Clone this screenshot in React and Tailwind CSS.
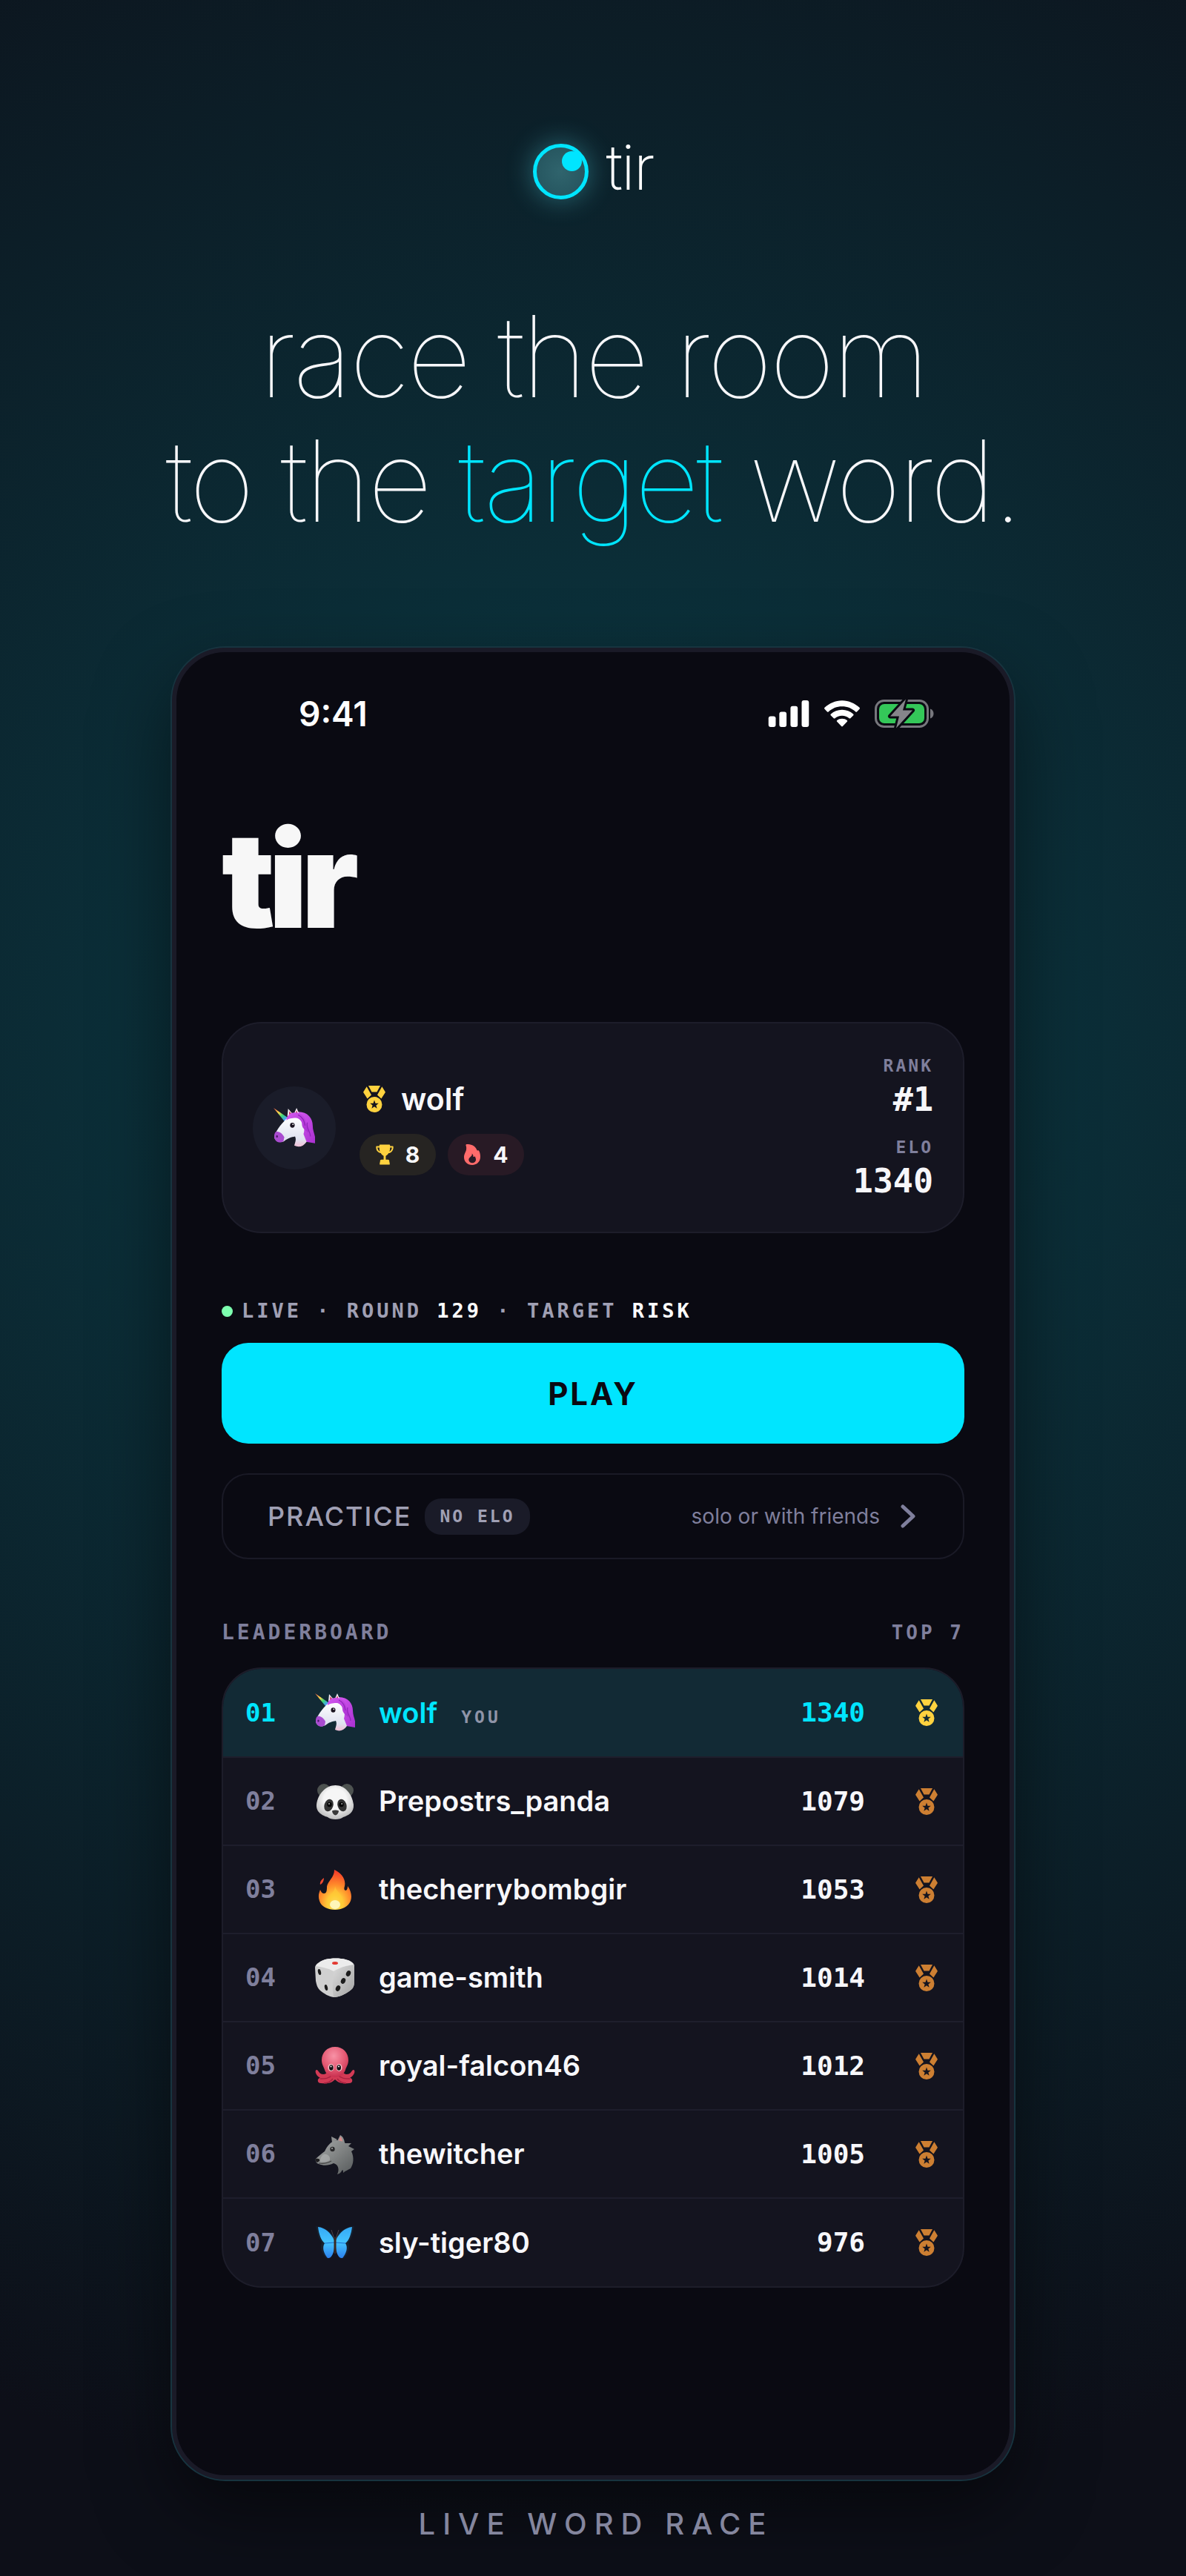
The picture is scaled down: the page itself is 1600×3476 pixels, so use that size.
const players = [
  { rank: "01", avatar: Unicorn, name: "wolf", elo: 1340, you: true },
  { rank: "02", avatar: Panda, name: "Prepostrs_panda", elo: 1079 },
  { rank: "03", avatar: Fire, name: "thecherrybombgir", elo: 1053 },
  { rank: "04", avatar: Die, name: "game-smith", elo: 1014 },
  { rank: "05", avatar: Octopus, name: "royal-falcon46", elo: 1012 },
  { rank: "06", avatar: Wolf, name: "thewitcher", elo: 1005 },
  { rank: "07", avatar: Butterfly, name: "sly-tiger80", elo: 976 },
];

/* ---------- avatars, all on a 54x54 grid ---------- */

function Unicorn({ className }) {
  return (
    <svg viewBox="0 0 54 54" className={className} aria-hidden="true">
      <defs>
        <linearGradient id="horn" x1="0" y1="0" x2="1" y2="1">
          <stop offset="0" stopColor="#ff5a4d" />
          <stop offset=".35" stopColor="#ffd84a" />
          <stop offset=".6" stopColor="#38d67a" />
          <stop offset=".85" stopColor="#4a9bff" />
          <stop offset="1" stopColor="#b58cff" />
        </linearGradient>
        <linearGradient id="mane" x1="0" y1="0" x2="1" y2="1">
          <stop offset="0" stopColor="#d45af0" />
          <stop offset="1" stopColor="#a92fd0" />
        </linearGradient>
        <linearGradient id="uniFace" x1="0" y1="0" x2="0" y2="1">
          <stop offset="0" stopColor="#ffffff" />
          <stop offset=".75" stopColor="#dfe2f0" />
          <stop offset="1" stopColor="#f0bfd6" />
        </linearGradient>
      </defs>
      <path d="M30 6C44 5 51 14 51 24c0 9 5 14 3 23-4-1-7-1-12-2l-8-17z" fill="url(#mane)" />
      <path d="M18 12 19 2l6 7zM26 10l4-9 4 9-2 7z" fill="#f3eef6" />
      <path d="M20 10l.6-5 3 4zM27.500 11 30 4l2.500 7-1.500 5z" fill="#c8365f" />
      <path d="M0 1 19 14l-5 4z" fill="url(#horn)" />
      <path d="M14 18c4-6 14-7 20-2 6 6 7 13 5 19l4 10c-4 6-10 8-16 5 1-4 3-8 1-12-5 1-9 2-14 6-5 3-12 1-13-5 0-4 6-14 13-21z" fill="url(#uniFace)" />
      <path d="M3 32c3-1 8 1 11 7l-1 5c-5 4-11 1-12-5 0-3 0-5 2-7z" fill="#a94bd0" />
      <path d="M17 17c-1-5 5-11 12-10 7 0 12 5 13 12 1 5 4 8 3 14-3-3-8-5-8-11 0-4-3-7-7-8-4 0-9 0-13 3z" fill="url(#mane)" />
      <path d="M32 10c7 3 8 9 9 14M44 20c-2 8 4 11 4 18" stroke="#8f24b8" strokeWidth="1.200" fill="none" />
      <ellipse cx="24.500" cy="23.500" rx="3" ry="3.300" fill="#1b1420" />
      <circle cx="25.300" cy="22.300" r=".9" fill="#fff" />
      <ellipse cx="4.500" cy="38" rx="1.200" ry="1.600" fill="#4a1666" />
    </svg>
  );
}

function Panda({ className }) {
  return (
    <svg viewBox="0 0 54 54" className={className} aria-hidden="true">
      <defs>
        <radialGradient id="pandaFace" cx=".5" cy=".4" r=".6">
          <stop offset=".5" stopColor="#f6f6f6" />
          <stop offset="1" stopColor="#bdbdbd" />
        </radialGradient>
      </defs>
      <circle cx="12" cy="12" r="9" fill="#4d5250" />
      <circle cx="43" cy="12" r="9" fill="#4d5250" />
      <path d="M27.500 5C40 5 50 16 52 31c1 11-8 15-14 17-4 4-17 4-21 0C11 46 1 42 2 31 4 16 15 5 27.500 5z" fill="url(#pandaFace)" />
      <ellipse cx="18.500" cy="32" rx="6" ry="8.500" fill="#333" transform="rotate(18 18.500 32)" />
      <ellipse cx="36.500" cy="32" rx="6" ry="8.500" fill="#333" transform="rotate(-18 36.500 32)" />
      <circle cx="19.500" cy="31" r="3.200" fill="#050505" />
      <circle cx="35.500" cy="31" r="3.200" fill="#050505" />
      <circle cx="19" cy="30" r="1" fill="#aaa" />
      <circle cx="36.200" cy="30" r="1" fill="#aaa" />
      <path d="M23 39.500q4.500-2 9 0c0 3-3 6-4.500 6S23 42.500 23 39.500z" fill="#3a3a3a" />
    </svg>
  );
}

function Fire({ className }) {
  return (
    <svg viewBox="0 0 54 54" className={className} aria-hidden="true">
      <defs>
        <radialGradient id="fireBody" cx=".5" cy=".85" r=".8">
          <stop offset="0" stopColor="#fff6a0" />
          <stop offset=".25" stopColor="#ffd43c" />
          <stop offset=".6" stopColor="#ff8a2a" />
          <stop offset="1" stopColor="#f4402a" />
        </radialGradient>
      </defs>
      <path d="M26 0c9 4 16 12 14 22-1 3-1 5 1 6 2 0 3-3 3-6 5 7 6 14 4 20-3 8-12 12-21 12S8 50 6 42C4 36 5 32 7 27c1 3 3 5 5 5 4 0 4-5 4-9 1-8 10-12 10-23z" fill="url(#fireBody)" />
      <path d="M12 11c0 4-2 8-5 9-1-4 2-7 5-9z" fill="#ee4a30" />
      <path d="M27 22c1 7 9 10 10 17 3 8-3 14-10 14s-13-6-10-14c3-6 10-9 10-17z" fill="#ffc935" opacity=".65" />
      <ellipse cx="27" cy="47" rx="7" ry="6" fill="#fff9c4" opacity=".9" />
    </svg>
  );
}

function Die({ className }) {
  return (
    <svg viewBox="0 0 54 54" className={className} aria-hidden="true">
      <defs>
        <linearGradient id="dieRight" x1="0" y1="0" x2="1" y2="1">
          <stop offset="0" stopColor="#dcdcdc" />
          <stop offset="1" stopColor="#a3a3a3" />
        </linearGradient>
      </defs>
      <path d="M14 2C22 0 34 0 41 2c6 2 11 4 12 8v22c0 6-2 10-7 13-6 4-13 8-21 8-7-1-13-5-18-9-4-4-5-8-6-13L0 13c0-5 8-9 14-11z" fill="#d0d0d0" />
      <path d="M25 18c8-5 19-8 27-9l1 3v20c0 6-2 10-7 13-6 4-13 8-21 8-2-11-2-23 0-35z" fill="url(#dieRight)" />
      <path d="M1 11C4 6 10 3 14 2c8-2 20-2 27 0 5 1 9 3 11 7-9 1-19 4-27 9-7-4-16-6-24-7z" fill="#ececec" />
      <ellipse cx="27" cy="7" rx="4" ry="2" fill="#e33a32" />
      <g fill="#1c1c1c">
        <ellipse cx="6" cy="19" rx="2" ry="4" transform="rotate(-14 6 19)" />
        <ellipse cx="15" cy="40" rx="2" ry="4" transform="rotate(-14 15 40)" />
        <ellipse cx="45" cy="21" rx="3" ry="4" transform="rotate(24 45 21)" />
        <ellipse cx="38" cy="31" rx="3" ry="4" transform="rotate(24 38 31)" />
        <ellipse cx="31" cy="41" rx="3" ry="4" transform="rotate(24 31 41)" />
      </g>
    </svg>
  );
}

function Octopus({ className }) {
  return (
    <svg viewBox="0 0 54 54" className={className} aria-hidden="true">
      <defs>
        <radialGradient id="octoHead" cx=".45" cy=".3" r=".7">
          <stop offset="0" stopColor="#f892a6" />
          <stop offset=".6" stopColor="#e45a74" />
          <stop offset="1" stopColor="#c9304f" />
        </radialGradient>
      </defs>
      <path d="M2 32c-3 1-1 8 5 11-4 0-5 7 1 7 8 1 14 0 19-5 5 5 11 6 19 5 6 0 5-7 1-7 6-3 8-10 5-11-3 0-3 6-9 6-3 0-5-2-7-4H18c-2 2-4 4-7 4-6 0-6-6-9-6z" fill="#d23a55" />
      <path d="M7 44c6 0 12 0 16-5M47 44c-6 0-12 0-16-5M12 50c5 0 9-2 12-6M42 50c-5 0-9-2-12-6" stroke="#a82340" strokeWidth="1.500" fill="none" />
      <path d="M27 1c11 0 18 8 18 18 0 6-3 9-4 13-2 6-7 10-14 10s-12-4-14-10c-1-4-4-7-4-13C9 9 16 1 27 1z" fill="url(#octoHead)" />
      <ellipse cx="21.500" cy="29" rx="4" ry="5" fill="#f5c0c8" />
      <ellipse cx="32.500" cy="29" rx="4" ry="5" fill="#f5c0c8" />
      <ellipse cx="21.800" cy="29" rx="2.800" ry="3.800" fill="#161014" />
      <ellipse cx="32.200" cy="29" rx="2.800" ry="3.800" fill="#161014" />
      <circle cx="21.500" cy="27.500" r="1" fill="#fff" />
      <circle cx="32" cy="27.500" r="1" fill="#fff" />
    </svg>
  );
}

function Wolf({ className }) {
  return (
    <svg viewBox="0 0 54 54" className={className} aria-hidden="true">
      <defs>
        <linearGradient id="wolfFur" x1="0" y1="0" x2="1" y2="1">
          <stop offset="0" stopColor="#a6a8a8" />
          <stop offset=".5" stopColor="#7f8282" />
          <stop offset="1" stopColor="#55595a" />
        </linearGradient>
      </defs>
      <path d="M23 11 22 3l8 4zM30 9l4-8c4 2 6 7 6 12z" fill="#8e9090" />
      <path d="M32 9l2-6c3 2 3 6 3 9z" fill="#d58b8b" />
      <path d="M1 33c4-4 8-7 12-10 3-7 8-13 15-15 5 0 9 1 13 4l8 0-4 4 8 4-4 3c4 8 3 17-1 23-3 2-7 3-10 6 0-3 0-3-1-4-2 3-3 5-7 6 3-6 2-13-5-15-6 3-13 4-20 1-3-1-5-4-4-7z" fill="url(#wolfFur)" />
      <path d="M1 33c3-1 6 0 5 3l-3 2c-2-1-3-3-2-5z" fill="#1c1c1e" />
      <path d="M5 39c7 1 12 0 17-3" stroke="#444" strokeWidth="1.200" fill="none" />
      <path d="M12 27c5-1 9 3 8 8-5 3-9 3-13 2 0-4 1-8 5-10z" fill="#b9bbbb" opacity=".55" />
      <circle cx="23.500" cy="20" r="3.200" fill="#2a2a2c" />
      <circle cx="23" cy="19" r=".9" fill="#bbb" />
    </svg>
  );
}

function Butterfly({ className }) {
  return (
    <svg viewBox="0 0 54 54" className={className} aria-hidden="true">
      <defs>
        <linearGradient id="wing" x1="0" y1="0" x2="0" y2="1">
          <stop offset="0" stopColor="#35a9f5" />
          <stop offset=".5" stopColor="#45c4ff" />
          <stop offset="1" stopColor="#2c80ee" />
        </linearGradient>
      </defs>
      <path d="M27 21C22 11 12 6 1 5c2 9 4 18 8 22-3 6 0 15 6 21 6 2 9-4 11-12h2c2 8 5 14 11 12 6-6 9-15 6-21 4-4 6-13 8-22-11 1-21 6-26 16z" fill="#16202e" />
      <path d="M26 24C21 13 13 7 4 6c1 9 4 18 9 22-4 6-1 14 4 20 5 1 8-6 9-14zM28 24c5-11 13-17 22-18-1 9-4 18-9 22 4 6 1 14-4 20-5 1-8-6-9-14z" fill="url(#wing)" />
      <path d="M13 28 26 27M41 28 28 27" stroke="#1c6fd0" strokeWidth="1" />
      <path d="M26 22l-4-12M28 22l4-12" stroke="#4b4148" strokeWidth="1" />
      <rect x="25.500" y="20" width="3" height="22" rx="1.500" fill="#3b2a22" />
    </svg>
  );
}

/* ---------- small icons ---------- */

function Medal({ className }) {
  return (
    <svg viewBox="0 0 30 36" className={className} fill="currentColor" aria-hidden="true">
      <path d="M7 0h16l-4.500 8.500h-7z" />
      <path d="M4.700 1.300 11 12.600 5.600 17.600.3 9.200a1 1 0 0 1 0-1zM25.300 1.300 19 12.600l5.400 5 5.300-8.400a1 1 0 0 0 0-1z" />
      <path
        fillRule="evenodd"
        d="M15 15a10.500 10.500 0 1 1 0 21 10.500 10.500 0 0 1 0-21zm0 4.600-1.500 4.100-4.300.1 3.400 2.700-1.200 4.200 3.600-2.400 3.600 2.400-1.200-4.200 3.400-2.700-4.300-.1z"
      />
    </svg>
  );
}

function Trophy() {
  return (
    <svg viewBox="0 0 25 28" className="h-7 w-6 text-[#ffd23f]" fill="currentColor" aria-hidden="true">
      <path d="M6 0h13c.7 0 1 .4 1 1v1h3.500c.8 0 1.200.5 1.200 1.200C24.700 8 22 11.500 18 12c-1 2-2.500 3.200-4 3.700V21h3c1.200 0 2 .8 2 2v2h.5v3h-14v-3H6v-2c0-1.200.8-2 2-2h3v-5.300C9.500 15.200 8 14 7 12 3 11.500.3 8 .3 3.200.3 2.500.7 2 1.500 2H5V1c0-.6.3-1 1-1zM2.300 4c.3 2.500 1.500 4.600 3.500 5.500C5.200 8 5 6 5 4zm20.400 0H20c0 2-.2 4-.8 5.500 2-.9 3.200-3 3.500-5.500z" />
    </svg>
  );
}

function Flame() {
  return (
    <svg viewBox="0 0 22 28" className="h-7 w-6 text-[#ff6b6b]" fill="currentColor" aria-hidden="true">
      <path
        fillRule="evenodd"
        d="M4 0c6-.3 11 2.500 13 7 .3 1 .8 1.700 1.600 1.500.8-.3 1.200-.2 1.600.6 1.300 2.200 1.800 5 1.800 8C22 23.500 17.500 28 11 28S0 23.500 0 17.500C0 13 2.500 10.500 3 7.500 3.300 5 3.200 3 2.500 1.500 2.200.7 3 0 4 0zm6.500 12.500c.8 2-.3 3.300-1.800 4.500-2 1.700-2.700 3-2.200 5 .5 2 2.200 3.200 4.500 3.200 3 0 5-2 5-4.500 0-2-.8-3.500-1.500-4.500-.5.700-1.200 1-2 .8.2-1.800-.5-3.500-2-4.500z"
      />
    </svg>
  );
}

function StatusIcons() {
  return (
    <div className="flex items-center gap-5 text-white">
      <svg viewBox="0 0 56 37" className="h-9 w-14" fill="currentColor" aria-label="Signal">
        <rect x="0" y="22" width="10" height="15" rx="3" />
        <rect x="15" y="16" width="10" height="21" rx="3" />
        <rect x="30.500" y="8" width="10" height="29" rx="3" />
        <rect x="46" y="0" width="10" height="37" rx="3" />
      </svg>
      <svg viewBox="0 0 50 37" className="h-9 w-12" fill="currentColor" aria-label="Wi-Fi">
        <path d="M25 0c9.500 0 18 4 24.500 10 .6.700.6 1.300 0 2l-3.700 3.800c-.5.500-1.100.5-1.700 0C39 11 32.400 8.300 25 8.300S11 11 5.900 15.800c-.6.500-1.200.5-1.700 0L.5 12c-.6-.7-.6-1.300 0-2C7 4 15.500 0 25 0z" />
        <path d="M25 13c6 0 11.500 2.300 15.700 6 .7.600.7 1.300 0 2l-4 4c-.5.500-1.100.5-1.700 0-2.800-2.300-6-3.700-10-3.700s-7.200 1.400-10 3.700c-.6.500-1.200.5-1.700 0l-4-4c-.7-.7-.7-1.400 0-2C13.500 15.300 19 13 25 13z" />
        <path d="M25 25.500c2.700 0 5 .9 7 2.400.6.500.7 1.200.1 1.800l-6.200 6.500c-.6.600-1.200.6-1.800 0l-6.200-6.500c-.6-.6-.5-1.300.1-1.800 2-1.500 4.300-2.400 7-2.400z" />
      </svg>
      <svg viewBox="0 0 80 39" className="h-10 w-20" aria-label="Battery charging">
        <rect x="1.500" y="2" width="70" height="35" rx="11" fill="none" stroke="#77777d" strokeWidth="3" />
        <rect x="6" y="6.500" width="61" height="26" rx="7" fill="#34c759" />
        <path d="M75 13c6 2 6 11 0 13z" fill="#77777d" />
        <path d="M42 0 21 23h12l-4 16 22-24H38z" fill="#85858a" stroke="#0a0a12" strokeWidth="6" strokeLinejoin="round" paintOrder="stroke" />
      </svg>
    </div>
  );
}

function Logo() {
  return (
    <div className="flex size-[75px] rounded-full border-[5px] border-[#00e5ff] bg-[radial-gradient(circle,#30646d,#23525c)] shadow-[0_0_36px_rgba(90,220,235,0.4)]">
      <span className="mt-[5px] ml-[34px] size-[27px] rounded-full bg-[#00e5ff]" />
    </div>
  );
}

function ProfileCard() {
  return (
    <section className="mt-[102px] flex h-[285px] items-center rounded-[54px] border-2 border-[#1d1d2a] bg-[#14141f] px-10">
      <div className="flex size-28 shrink-0 items-center justify-center rounded-full bg-[#1a1c29]">
        <Unicorn className="size-14" />
      </div>
      <div className="ml-8 flex-1">
        <div className="flex h-[52px] items-center gap-5 pl-1">
          <Medal className="h-9 w-8 text-[#ffd23f]" />
          <h2 className="text-[41px] leading-[52px] font-semibold text-[#f7f7fa]">wolf</h2>
        </div>
        <div className="mt-[21px] flex gap-4 text-[30px] leading-8 font-bold text-[#f7f7fa]">
          <span className="flex h-14 w-[103px] items-center justify-center gap-4 rounded-full bg-[#262422]">
            <Trophy /> 8
          </span>
          <span className="flex h-14 w-[103px] items-center justify-center gap-4 rounded-full bg-[#281a25]">
            <Flame /> 4
          </span>
        </div>
      </div>
      <dl className="text-right font-['DejaVu_Sans_Mono',monospace] font-bold">
        <dt className="text-[23px] leading-7 tracking-[3px] text-[#7f7f9c]">RANK</dt>
        <dd className="mt-1.5 text-[45px] leading-[52px] text-[#f7f7fa]">#1</dd>
        <dt className="mt-6 text-[23px] leading-7 tracking-[3px] text-[#7f7f9c]">ELO</dt>
        <dd className="mt-1.5 text-[45px] leading-[52px] text-[#f7f7fa]">1340</dd>
      </dl>
    </section>
  );
}

function Leaderboard() {
  return (
    <section className="font-['DejaVu_Sans_Mono',monospace] font-bold">
      <div className="mt-[83px] flex items-center justify-between leading-8 text-[#7f7f9c]">
        <h2 className="text-[28px] tracking-[4px]">LEADERBOARD</h2>
        <span className="text-[26px] tracking-[4px]">TOP 7</span>
      </div>
      <div className="mt-[31px] overflow-hidden rounded-[54px] border-2 border-[#1d1d2a] bg-[#14141f]">
        <table className="w-full table-fixed border-collapse">
          <tbody>
            {players.map((p) => (
              <tr key={p.rank} className={p.you ? "h-[119px] bg-[#122a35]" : "h-[119px] border-t-2 border-[#1e1e2c]"}>
                <td className={p.you ? "w-[124px] pl-[30px] text-[34px] text-[#00e5ff]" : "w-[124px] pl-[30px] text-[34px] text-[#7f7f9c]"}>{p.rank}</td>
                <td className="w-[86px]">
                  <p.avatar className="size-[54px]" />
                </td>
                <td className="font-[Inter,sans-serif] text-[38px] font-semibold">
                  <span className={p.you ? "text-[#00e5ff]" : "text-[#f7f7fa]"}>{p.name}</span>
                  {p.you && <span className="ml-8 font-['DejaVu_Sans_Mono',monospace] text-[23px] font-bold tracking-[4px] text-[#8f94a8]">YOU</span>}
                </td>
                <td className={p.you ? "w-[120px] text-right text-[36px] text-[#00e5ff]" : "w-[120px] text-right text-[36px] text-[#f7f7fa]"}>{p.elo}</td>
                <td className="w-[132px] pr-[34px]">
                  <Medal className={p.you ? "ml-auto h-9 w-[30px] text-[#ffd23f]" : "ml-auto h-9 w-[30px] text-[#cd7f32]"} />
                </td>
              </tr>
            ))}
          </tbody>
        </table>
      </div>
    </section>
  );
}

export default function App() {
  return (
    <main className="flex min-h-screen flex-col items-center bg-[#0d0f18] bg-[radial-gradient(ellipse_125%_57%_at_50%_41%,#0a3d47,#0d0f18)] pt-[194px] pb-[46px] font-[Inter,sans-serif]">
      <div className="flex items-center gap-6">
        <Logo />
        <span className="pb-3 text-[84px] leading-[63px] font-extralight tracking-tight text-white">tir</span>
      </div>

      <h1 className="mt-32 text-center text-[152px] leading-[168px] font-thin tracking-tight text-[#f7f7fa]">
        race the room
        <br />
        to the <span className="text-[#00e5ff]">target</span> word.
      </h1>

      {/* phone */}
      <div className="mt-[141px] w-[71%] rounded-[72px] border-[6px] border-[#1a1a27] bg-[#0a0a12] px-[61px] pt-[59px] pb-[253px] shadow-[0_0_0_2px_#17343f,0_40px_100px_rgba(0,0,0,0.5)]">
        <div className="flex h-12 items-center justify-between pr-[41px] pl-[104px]">
          <span className="text-[46px] leading-[48px] font-semibold text-white">9:41</span>
          <StatusIcons />
        </div>

        <p className="mt-[110px] text-[180px] leading-[180px] font-black tracking-tighter text-[#f7f7f7]">tir</p>

        <ProfileCard />

        <p className="mt-[89px] flex items-center gap-3 font-['DejaVu_Sans_Mono',monospace] text-[27px] leading-8 font-bold tracking-[4px] text-[#a0a0b4]">
          <span className="size-[15px] rounded-full bg-[#7dffaf]" />
          <span>
            LIVE · ROUND <span className="text-white">129</span> · TARGET <span className="text-white">RISK</span>
          </span>
        </p>

        <button className="mt-[27px] h-[136px] w-full rounded-[36px] bg-[#00e5ff] text-[42px] font-bold tracking-[3px] text-[#0a0a12]">PLAY</button>

        <button className="mt-10 flex h-[116px] w-full items-center rounded-[36px] border-2 border-[#1a1a26] pr-16 pl-[60px]">
          <span className="text-[36px] font-medium tracking-[2px] text-[#a0a0b4]">PRACTICE</span>
          <span className="ml-[18px] rounded-[22px] bg-[#1a1b28] px-5 font-['DejaVu_Sans_Mono',monospace] text-[23px] leading-[49px] font-bold tracking-[3px] text-[#a0a0b4]">NO ELO</span>
          <span className="ml-auto text-[28px] text-[#7f7f9c]">solo or with friends</span>
          <svg viewBox="0 0 20 32" className="ml-7 h-8 w-5" fill="none" stroke="#7f7f9c" strokeWidth="5" strokeLinecap="round" strokeLinejoin="round" aria-hidden="true">
            <path d="M3 3l14 13L3 29" />
          </svg>
        </button>

        <Leaderboard />
      </div>

      <p className="mt-9 pl-2 text-[40px] leading-[48px] font-medium tracking-[10px] text-[#84869e]">LIVE WORD RACE</p>
    </main>
  );
}
